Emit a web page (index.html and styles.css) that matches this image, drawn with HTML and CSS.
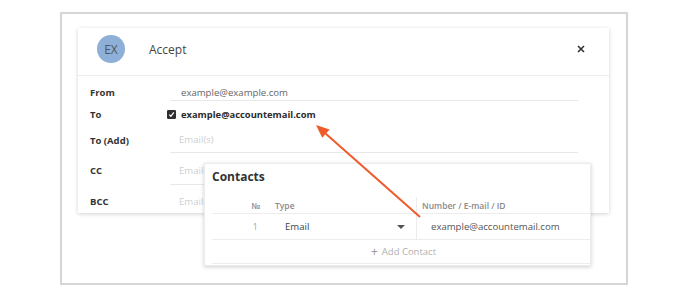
FILE: index.html
```html
<!DOCTYPE html>
<html lang="en">
<head>
  <meta charset="UTF-8">
  <title>Accept</title>
  <link rel="stylesheet" href="styles.css">
</head>
<body>
  <div class="frame">
    <div class="dialog">
      <div class="dialog-head">
        <div class="avatar">EX</div>
        <div class="dialog-title">Accept</div>
        <svg class="close" width="8" height="8" viewBox="0 0 8 8">
          <path d="M1 1 L7 7 M7 1 L1 7" stroke="#333" stroke-width="1.6" fill="none"/>
        </svg>
      </div>

      <div class="dialog-body">
        <div class="row row-from">
          <div class="label">From</div>
          <div class="field value">example@example.com</div>
        </div>
        <div class="row row-to">
          <div class="label">To</div>
          <div class="field field-plain">
            <svg class="check" width="9" height="9" viewBox="0 0 9 9">
              <rect width="9" height="9" rx="1.2" fill="#2f2f2f"/>
              <path d="M2.3 4.6 L3.9 6.3 L6.8 2.4" stroke="#fff" stroke-width="1.3" fill="none"/>
            </svg>
            <span class="strong">example@accountemail.com</span>
          </div>
        </div>
        <div class="row row-add">
          <div class="label">To (Add)</div>
          <div class="field placeholder">Email(s)</div>
        </div>
        <div class="row row-cc">
          <div class="label">CC</div>
          <div class="field placeholder">Email(s)</div>
        </div>
        <div class="row row-cc">
          <div class="label">BCC</div>
          <div class="field placeholder">Email(s)</div>
        </div>
      </div>
    </div>

    <div class="contacts">
      <div class="contacts-title">Contacts</div>
      <div class="grid-row grid-head">
        <div class="c-num">№</div>
        <div class="c-type">Type</div>
        <div class="c-val">Number / E-mail / ID</div>
      </div>
      <div class="grid-row grid-item">
        <div class="c-num">1</div>
        <div class="c-type">Email <span class="caret"></span></div>
        <div class="c-val">example@accountemail.com</div>
      </div>
      <div class="add-row"><span class="plus">+</span> Add Contact</div>
    </div>
  </div>

  <svg class="arrow" width="688" height="301" viewBox="0 0 688 301">
    <line x1="420" y1="217" x2="325.5" y2="133.5" stroke="#ef5a2a" stroke-width="2"/>
    <polygon points="316,125 329.6,129.4 322.2,137.8" fill="#ef5a2a"/>
  </svg>
</body>
</html>
```

FILE: styles.css
```css
body {
  margin: 0;
  background: #fff;
  font-family: "Open Sans", "DejaVu Sans", sans-serif;
  color: #333;
  position: relative;
}
.frame {
  position: relative;
  box-sizing: border-box;
  margin: 12px 0 0 60px;
  width: 568px;
  height: 273px;
  border: 2px solid #d6d6d6;
  padding: 14px 16px;
}
.dialog {
  width: 531px;
  height: 185px;
  background: #fff;
  box-shadow: 0 1px 4px rgba(0, 0, 0, 0.18);
  overflow: hidden;
}
.dialog-head {
  box-sizing: border-box;
  height: 48px;
  border-bottom: 1px solid #ececec;
  display: flex;
  align-items: center;
  padding: 0 24px 5px 19px;
}
.avatar {
  width: 28px;
  height: 28px;
  border-radius: 50%;
  background: #8eafd7;
  color: #4e5764;
  font-size: 12px;
  display: flex;
  align-items: center;
  justify-content: center;
}
.dialog-title {
  margin-left: 24px;
  font-size: 12px;
  color: #444;
  flex: 1;
}
.close {
  display: block;
}
.dialog-body {
  padding: 8px 31px 0 12px;
}
.row {
  display: flex;
  align-items: stretch;
}
.label {
  width: 80px;
  font-size: 9.5px;
  font-weight: 700;
  color: #333;
  display: flex;
  align-items: center;
}
.field {
  flex: 1;
  display: flex;
  align-items: center;
  border-bottom: 1px solid #e8e8e8;
  font-size: 9.6px;
}
.field-plain {
  border-bottom-color: transparent;
  margin-left: -3px;
}
.value {
  padding-left: 11px;
  color: #666;
}
.placeholder {
  padding-left: 9px;
  color: #cfcfcf;
}
.strong {
  margin-left: 5px;
  font-size: 9.4px;
  font-weight: 700;
  color: #2b2b2b;
}
.check {
  display: block;
}
.row-from {
  height: 17px;
}
.row-to {
  height: 17px;
  margin-top: 5px;
}
.row-add {
  height: 26px;
  margin-top: 4px;
}
.row-cc {
  height: 29px;
  margin-top: 2px;
}
.row-add + .row-cc {
  margin-top: 3px;
}

.contacts {
  position: absolute;
  left: 142px;
  top: 149px;
  box-sizing: border-box;
  width: 387px;
  height: 103px;
  background: #fff;
  border: 1px solid #ececec;
  box-shadow: 0 1px 4px rgba(0, 0, 0, 0.2);
  padding-left: 7px;
}
.contacts-title {
  box-sizing: border-box;
  height: 33px;
  padding-top: 5px;
  line-height: 16px;
  font-size: 12px;
  font-weight: 700;
  color: #333;
}
.grid-row {
  display: grid;
  grid-template-columns: 58px 146px 1fr;
  border-bottom: 1px solid #ececec;
}
.grid-row > div {
  display: flex;
  align-items: center;
}
.grid-head {
  height: 16px;
  font-size: 8.5px;
  font-weight: 600;
  color: #8a8a8a;
}
.grid-item {
  height: 25px;
  font-size: 9.6px;
  color: #444;
}
.c-num {
  justify-content: flex-end;
  padding-right: 10px;
}
.grid-item .c-num {
  color: #aaa;
  padding-right: 12px;
}
.c-type {
  padding-left: 5px;
}
.grid-item .c-type {
  padding-left: 15px;
}
.c-val {
  border-left: 1px solid #ececec;
  padding-left: 5px;
}
.grid-item .c-val {
  padding-left: 14px;
  color: #555;
}
.caret {
  margin-left: auto;
  margin-right: 11px;
  width: 0;
  height: 0;
  border-left: 4px solid transparent;
  border-right: 4px solid transparent;
  border-top: 4px solid #555;
}
.add-row {
  height: 23px;
  border-bottom: 1px solid #ececec;
  display: flex;
  align-items: center;
  justify-content: center;
  padding-left: 5px;
  font-size: 9.5px;
  color: #b0b0b0;
}
.plus {
  font-size: 12px;
  margin-right: 4px;
  color: #999;
}
.arrow {
  position: absolute;
  left: 0;
  top: 0;
  pointer-events: none;
}
```
